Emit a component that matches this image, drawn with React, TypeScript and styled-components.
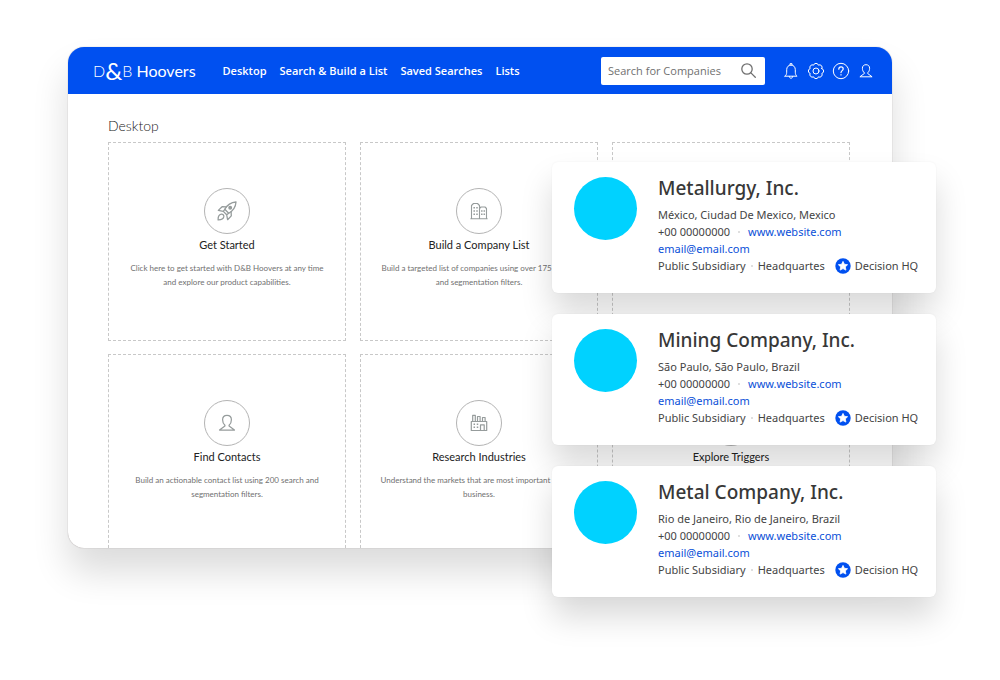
import React from "react";
import styled, { createGlobalStyle } from "styled-components";

const BLUE = "#0050f0";
const uiFont = `"Noto Sans", "Open Sans", sans-serif`;
const brandFont = `Lato, "Open Sans", sans-serif`;

const GlobalStyle = createGlobalStyle`
  * { box-sizing: border-box; }
  body { margin: 0; background: #fff; font-family: ${uiFont}; color: #3c3c3c; }
  h1, h2, h3, p, ul { margin: 0; padding: 0; }
`;

const Stage = styled.div`
  height: 100vh;
  padding: 47px 108px 132px 68px;
  overflow: hidden;
`;

const Showcase = styled.div`
  position: relative;
  height: 100%;
`;

const AppWindow = styled.div`
  height: 100%;
  display: flex;
  flex-direction: column;
  background: #fff;
  border-radius: 16px;
  overflow: hidden;
  box-shadow: 0 0 1px rgba(60, 40, 40, 0.5), 0 24px 36px rgba(0, 0, 0, 0.14);
`;

const Header = styled.header`
  flex: none;
  height: 47px;
  padding: 0 17px 0 25px;
  display: flex;
  align-items: center;
  background: ${BLUE};
  color: #fff;
`;

const Logo = styled.a`
  display: flex;
  align-items: center;
  color: #fff;
  text-decoration: none;
  font: 400 16px/24px ${brandFont};
  white-space: pre;
`;

const LogoLight = styled.span`
  font-weight: 300;
`;

const Ampersand = styled.span`
  font-size: 24px;
  line-height: 22px;
  font-weight: 400;
`;

const Nav = styled.nav`
  margin-left: 27px;
  flex: 1;
  display: flex;
  gap: 13px;
`;

const NavLink = styled.a`
  color: #fff;
  text-decoration: none;
  font: 600 11px/16px "Open Sans", sans-serif;
  white-space: nowrap;
`;

const Search = styled.label`
  width: 164px;
  height: 28px;
  padding: 0 8px 0 7px;
  display: flex;
  align-items: center;
  background: #fff;
  border-radius: 2px;
  color: #707070;
`;

const SearchInput = styled.input`
  flex: 1;
  min-width: 0;
  padding: 0;
  border: 0;
  outline: 0;
  background: none;
  font: 400 11px/16px "Open Sans", sans-serif;
  color: #707070;
  &::placeholder { color: #707070; opacity: 1; }
`;

const Tools = styled.div`
  margin-left: 17px;
  display: flex;
  gap: 7px;
`;

const IconButton = styled.button`
  width: 18px;
  height: 18px;
  padding: 0;
  border: 0;
  background: none;
  color: #fff;
  display: grid;
  place-items: center;
`;

const Main = styled.main`
  padding: 22px 42px 0 40px;
  font-family: ${brandFont};
`;

const PageTitle = styled.h1`
  font: 300 14px/20px ${brandFont};
  color: #222;
`;

const Grid = styled.div`
  margin-top: 6px;
  display: grid;
  grid-template-columns: repeat(3, 1fr);
  grid-auto-rows: 199px;
  gap: 13px 14px;
`;

const Tile = styled.section`
  padding-top: 45px;
  border: 1px dashed #c8c8c8;
  display: flex;
  flex-direction: column;
  align-items: center;
  text-align: center;
  white-space: nowrap;
`;

const TileIcon = styled.div`
  width: 46px;
  height: 46px;
  border: 1px solid #b4b4b4;
  border-radius: 50%;
  display: grid;
  place-items: center;
  color: #969c9c;
`;

const TileTitle = styled.h2`
  margin-top: 3px;
  font: 400 11px/16px ${brandFont};
  color: #222;
`;

const TileText = styled.p`
  margin-top: 8px;
  font: 400 8px/14px ${brandFont};
  color: #707070;
`;

const Cards = styled.div`
  position: absolute;
  top: 115px;
  right: -44px;
  width: 384px;
  display: flex;
  flex-direction: column;
  gap: 21px;
`;

const Card = styled.article`
  min-height: 131px;
  padding: 15px 12px 15px 22px;
  display: flex;
  gap: 21px;
  background: #fff;
  border-radius: 6px;
  box-shadow: 0 0 2px rgba(0, 0, 0, 0.05), 0 20px 32px rgba(0, 0, 0, 0.15);
`;

const Avatar = styled.div`
  flex: none;
  width: 63px;
  height: 63px;
  border-radius: 50%;
  background: #00d2ff;
`;

const Details = styled.div`
  font-size: 11px;
  line-height: 17px;
  color: #444;
  white-space: nowrap;
`;

const CompanyName = styled.h3`
  margin-bottom: 7px;
  font: 500 19px/22px ${uiFont};
  color: #383838;
`;

const Row = styled.div`
  display: flex;
  align-items: center;
`;

const Dot = styled.span<{ $space: number }>`
  width: 2px;
  height: 2px;
  margin: 0 ${(p) => p.$space}px;
  border-radius: 50%;
  background: #d4d4d4;
`;

const TextLink = styled.a`
  color: #0a4fd8;
  text-decoration: none;
`;

const Badge = styled.svg`
  margin: 0 4px 0 10px;
`;

const line = { fill: "none", stroke: "currentColor", strokeLinejoin: "round", strokeLinecap: "round" } as const;

const BellIcon = () => (
  <svg width="18" height="18" viewBox="0 0 18 18" {...line}>
    <path d="M3 14.2h12c-1.200-1-1.700-2.200-1.700-4V7.700C13.300 5 11.600 3.100 9 3.100S4.700 5 4.700 7.700v2.500c0 1.800-.5 3-1.700 4z" />
    <path d="M8 3V1.700h2V3M7.300 14.500c.2 1.200.8 1.700 1.700 1.700s1.500-.5 1.700-1.700" />
  </svg>
);

const scallops = (() => {
  const pt = (a: number, r: number) => `${(9 + r * Math.cos(a)).toFixed(2)} ${(9 + r * Math.sin(a)).toFixed(2)}`;
  let d = `M${pt(-Math.PI / 8, 6.3)}`;
  for (let i = 0; i < 8; i++) d += `A2.500 2.500 0 0 1 ${pt((i + 0.5) * (Math.PI / 4), 6.3)}`;
  return d + "Z";
})();

const GearIcon = () => (
  <svg width="18" height="18" viewBox="0 0 18 18" {...line}>
    <path d={scallops} />
    <circle cx="9" cy="9" r="3" />
  </svg>
);

const HelpIcon = () => (
  <svg width="18" height="18" viewBox="0 0 18 18" {...line}>
    <circle cx="9" cy="9" r="7.700" />
    <path strokeWidth="1.200" d="M6.800 7.200c0-1.500.9-2.300 2.200-2.300s2.200.8 2.200 2c0 1.700-2.200 1.800-2.200 3.700M9 12.700v.2" />
  </svg>
);

const PersonIcon = ({ size = 18 }: { size?: number }) => (
  <svg width={size} height={size} viewBox="0 0 18 18" {...line}>
    <path d="M7.300 10.800C5.900 9.600 5.400 8 5.400 6.300 5.400 4 6.800 2.700 9 2.700s3.600 1.300 3.600 3.600c0 1.700-.5 3.300-1.900 4.500v.7l4.400 3.300H2.900l4.400-3.300z" />
  </svg>
);

const SearchIcon = () => (
  <svg width="17" height="17" viewBox="0 0 17 17" {...line} strokeWidth="1.300">
    <circle cx="7" cy="7" r="5.200" />
    <path d="M10.900 10.900l4.400 4.300" />
  </svg>
);

const RocketIcon = () => (
  <svg width="22" height="22" viewBox="0 0 22 22" {...line} strokeWidth="1.300">
    <path d="M20 2c-4.800.3-8.600 2.500-11.200 7.300l3.900 3.900C17.500 10.600 19.700 6.800 20 2z" />
    <path d="M10.400 6.900L6.100 6.700 2.300 10.400l5 1 3.400 3.400.9 4.900 3.700-3.800-.2-4.300M8.800 9.300L7.300 11.400M12.700 13.200l-2 1.600" />
    <path d="M5.300 14.200c-2.200.4-3.300 2.800-3.200 5.700 2.900.1 5.300-1 5.700-3.200.2-1.600-1-2.700-2.500-2.500z" />
    <circle cx="14.200" cy="7.800" r="1.300" fill="currentColor" />
  </svg>
);

const BuildingsIcon = () => (
  <svg width="18" height="18" viewBox="0 0 18 18" {...line} strokeWidth="1.100">
    <path d="M1.500 16.500V3.500l2-2h4l2 2v13M9.500 6.500l1.500-1.500h4l1.500 1.500v10M.8 16.700h16.400" />
    <path strokeDasharray="1.500 1.700" strokeLinecap="butt" strokeWidth="1.500" d="M4.200 5v9M7 5v9M11.800 8.200v6M14.300 8.200v6" />
  </svg>
);

const FactoryIcon = () => (
  <svg width="18" height="18" viewBox="0 0 18 18" {...line} strokeWidth="1.200">
    <path d="M1.300 16.500v-9h15.400v9zM2.700 7.500V1.300h2.600v6.200M7.500 7.500V2.500h2.600v5M12.500 7.500V3.500h2.600v4M10.500 16.500v-5.700h3.700v5.700" />
    <path strokeDasharray="1.600 1.400" strokeLinecap="butt" strokeWidth="1.500" d="M4.300 9.500v5.500M7.500 9.500v5.500" />
  </svg>
);

const StarBadge = () => (
  <Badge width="16" height="16" viewBox="0 0 16 16" aria-hidden="true">
    <circle cx="8" cy="8" r="7.700" fill={BLUE} />
    <path
      fill="#fff"
      stroke="#fff"
      strokeLinejoin="round"
      strokeWidth=".8"
      d="M8 3.400l1.400 2.900 3.200.4-2.300 2.200.6 3.200L8 10.600l-2.900 1.500.6-3.200-2.300-2.200 3.200-.4z"
    />
  </Badge>
);

type TileData = { title?: string; icon?: React.ReactNode; lines?: [string, string] };

const tiles: TileData[] = [
  {
    title: "Get Started",
    icon: <RocketIcon />,
    lines: ["Click here to get started with D&B Hoovers at any time", "and explore our product capabilities."],
  },
  {
    title: "Build a Company List",
    icon: <BuildingsIcon />,
    lines: ["Build a targeted list of companies using over 175 search", "and segmentation filters."],
  },
  {},
  {
    title: "Find Contacts",
    icon: <PersonIcon size={22} />,
    lines: ["Build an actionable contact list using 200 search and", "segmentation filters."],
  },
  {
    title: "Research Industries",
    icon: <FactoryIcon />,
    lines: ["Understand the markets that are most important to your", "business."],
  },
  { title: "Explore Triggers", icon: null },
];

const companies = [
  { name: "Metallurgy, Inc.", place: "México, Ciudad De Mexico, Mexico" },
  { name: "Mining Company, Inc.", place: "São Paulo, São Paulo, Brazil" },
  { name: "Metal Company, Inc.", place: "Rio de Janeiro, Rio de Janeiro, Brazil" },
];

export default function App() {
  return (
    <Stage>
      <GlobalStyle />
      <Showcase>
        <AppWindow>
          <Header>
            <Logo href="#">
              <LogoLight>D</LogoLight>
              <Ampersand>&amp;</Ampersand>
              <LogoLight>B</LogoLight> Hoovers
            </Logo>
            <Nav>
              {["Desktop", "Search & Build a List", "Saved Searches", "Lists"].map((label) => (
                <NavLink href="#" key={label}>{label}</NavLink>
              ))}
            </Nav>
            <Search>
              <SearchInput placeholder="Search for Companies" aria-label="Search for Companies" />
              <SearchIcon />
            </Search>
            <Tools>
              <IconButton aria-label="Notifications"><BellIcon /></IconButton>
              <IconButton aria-label="Settings"><GearIcon /></IconButton>
              <IconButton aria-label="Help"><HelpIcon /></IconButton>
              <IconButton aria-label="Account"><PersonIcon /></IconButton>
            </Tools>
          </Header>
          <Main>
            <PageTitle>Desktop</PageTitle>
            <Grid>
              {tiles.map((tile, i) => (
                <Tile key={i}>
                  {tile.title && (
                    <>
                      <TileIcon>{tile.icon}</TileIcon>
                      <TileTitle>{tile.title}</TileTitle>
                    </>
                  )}
                  {tile.lines && (
                    <TileText>
                      {tile.lines[0]}
                      <br />
                      {tile.lines[1]}
                    </TileText>
                  )}
                </Tile>
              ))}
            </Grid>
          </Main>
        </AppWindow>
        <Cards>
          {companies.map((c) => (
            <Card key={c.name}>
              <Avatar />
              <Details>
                <CompanyName>{c.name}</CompanyName>
                <p>{c.place}</p>
                <Row>
                  +00 00000000
                  <Dot $space={8} />
                  <TextLink href="#">www.website.com</TextLink>
                </Row>
                <Row><TextLink href="#">email@email.com</TextLink></Row>
                <Row>
                  Public Subsidiary
                  <Dot $space={5} />
                  Headquartes
                  <StarBadge />
                  Decision HQ
                </Row>
              </Details>
            </Card>
          ))}
        </Cards>
      </Showcase>
    </Stage>
  );
}
